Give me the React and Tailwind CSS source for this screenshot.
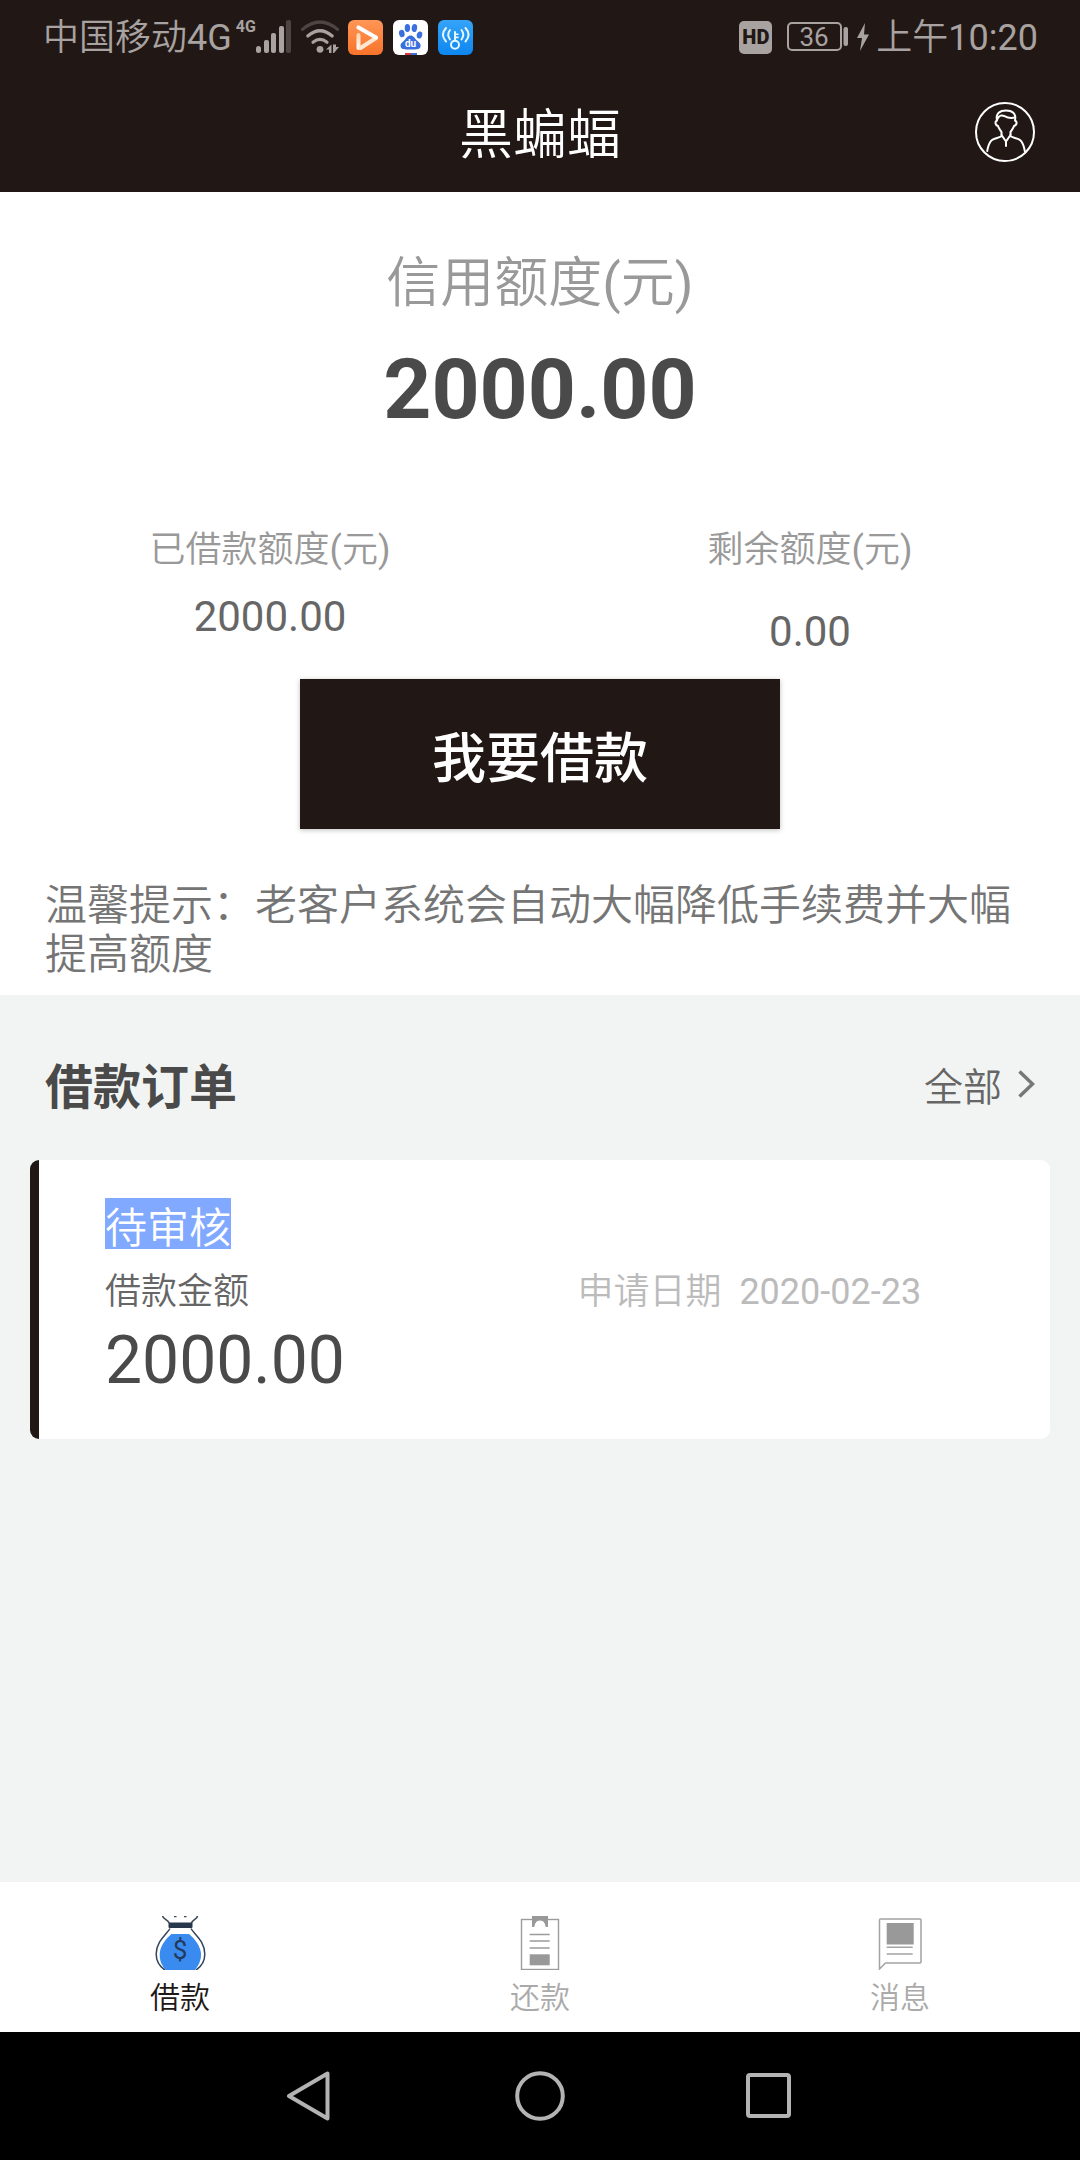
import React, { useState } from 'react';

const SignalIcon = () => (
    <svg width="36" height="34" viewBox="0 0 36 34" fill="#a8a2a1" aria-hidden="true">
        <rect x="0" y="26" width="5" height="7" rx="2.5" />
        <rect x="8" y="20" width="5" height="13" rx="2" />
        <rect x="15" y="13" width="5" height="20" rx="2" />
        <rect x="23" y="6" width="5" height="27" rx="2" />
        <rect x="30" y="0" width="5" height="33" rx="2" fill="#4d4544" />
    </svg>
);

const WifiIcon = () => (
    <svg width="40" height="36" viewBox="0 0 40 36" fill="none" strokeWidth="3.2" strokeLinecap="round" aria-hidden="true">
        <path d="M2.5 10.4Q20 -4.4 37.5 10.4" stroke="#4d4544" />
        <path d="M7.8 17Q20 6.5 32.2 17" stroke="#a8a2a1" />
        <path d="M13 23.2Q20 17.6 27 23.2" stroke="#a8a2a1" />
        <circle cx="20" cy="30.3" r="3.4" fill="#a8a2a1" />
        <path d="M31.500 25.500v8.500h-2.500v-3.500H26zM33 25.500v8.500h1l5-6h-3v-2.500z" fill="#a8a2a1" />
    </svg>
);

const PlayAppIcon = () => (
    <svg width="35" height="35" viewBox="0 0 35 35" fill="none" strokeLinecap="round" strokeLinejoin="round" aria-hidden="true">
        <defs>
            <linearGradient id="playBg" x1="0" y1="0" x2="0" y2="1">
                <stop offset="0" stopColor="#ff9656" />
                <stop offset="1" stopColor="#f9732a" />
            </linearGradient>
            <linearGradient id="playBar" x1="0" y1="14" x2="0" y2="29" gradientUnits="userSpaceOnUse">
                <stop offset="0" stopColor="#ffd2ac" />
                <stop offset="1" stopColor="#ffffff" />
            </linearGradient>
        </defs>
        <rect width="35" height="35" rx="6" fill="url(#playBg)" />
        <path d="M10.500 15v13" stroke="url(#playBar)" strokeWidth="4" />
        <path d="M12.500 28L28 18" stroke="#ffe6d0" strokeWidth="4" />
        <path d="M10.500 7.500L28 17.500" stroke="#fff" strokeWidth="4.200" />
    </svg>
);

const BaiduIcon = () => (
    <svg width="35" height="35" viewBox="0 0 35 35" aria-hidden="true">
        <rect width="35" height="35" rx="6" fill="#fff" />
        <path d="M12 33h6v2h-6z" fill="#d8383b" />
        <path d="M18 33h6v2h-6z" fill="#3a6fe0" />
        <g fill="#3a6fe0">
            <ellipse cx="8.800" cy="13.500" rx="2.800" ry="3.700" transform="rotate(-12 8.800 13.500)" />
            <ellipse cx="14.400" cy="8" rx="2.700" ry="4" />
            <ellipse cx="21.400" cy="8" rx="2.700" ry="4" transform="rotate(8 21.400 8)" />
            <ellipse cx="26.500" cy="15" rx="2.700" ry="3.600" transform="rotate(14 26.500 15)" />
            <path d="M17.500 15.500c3 0 4 2.700 6.200 4.700 3 2.600 4.600 4 3.700 6.800-1 2.700-3.800 2.400-9.900 2.400s-8.700.3-9.700-2.400c-.9-2.800.8-4.200 3.600-6.800 2.200-2 3.100-4.700 6.100-4.700z" />
        </g>
        <text x="17.500" y="27" textAnchor="middle" fill="#fff" fontSize="10" fontWeight="700" fontFamily="Roboto, sans-serif">du</text>
    </svg>
);

const WifiKeyIcon = () => (
    <svg width="35" height="35" viewBox="0 0 35 35" fill="none" stroke="#e6f6ff" strokeWidth="2" strokeLinecap="round" aria-hidden="true">
        <defs>
            <linearGradient id="keyBg" x1="0" y1="0" x2="0" y2="1">
                <stop offset="0" stopColor="#35a4f9" />
                <stop offset="1" stopColor="#0d86f0" />
            </linearGradient>
        </defs>
        <rect width="35" height="35" rx="6" fill="url(#keyBg)" stroke="none" />
        <circle cx="17" cy="24.700" r="4" />
        <path d="M17 20.500V12" />
        <path d="M18 14.200h2M18 17.400h2" strokeWidth="1.600" />
        <path d="M12 10Q8.500 14.500 12 19.500M8 8Q2 14.500 8 21.500" />
        <path d="M23.500 10Q27 14.500 23.500 19.500M27.500 8Q33.500 14.500 27.500 21.500" />
    </svg>
);

const BatteryIcon = () => (
    <svg width="64" height="32" viewBox="0 0 64 32" aria-hidden="true">
        <rect x="2" y="2" width="53" height="27" rx="4" fill="none" stroke="#a8a2a1" strokeWidth="2" />
        <rect x="57.500" y="6" width="4.500" height="19" rx="2" fill="#a8a2a1" />
        <text x="28" y="25" textAnchor="middle" fill="#a8a2a1" fontSize="26" fontWeight="400" fontFamily="Roboto, sans-serif">36</text>
    </svg>
);

const BoltIcon = () => (
    <svg width="14" height="28" viewBox="0 0 14 28" fill="#a8a2a1" aria-hidden="true">
        <path d="M9 0L1 15h5l-2 13L13 11.500H8z" />
    </svg>
);

const UserIcon = () => (
    <svg width="60" height="60" viewBox="0 0 60 60" fill="none" stroke="#fff" strokeWidth="2" strokeLinecap="round" strokeLinejoin="round" aria-hidden="true">
        <circle cx="30" cy="30" r="29" />
        <path d="M26.500 33v-3c-.8-1.500-2.800-3.500-3.500-6-3-1.200-3.500-4.300-1-5.500C20.500 11 25 8.500 31 8.500s10.500 2.500 9 10c2.500 1.200 2 4.300-1 5.500-.7 2.500-2.700 4.500-3.500 6v3" />
        <path d="M22.500 17c1.500-4 4.500-4 7-2.800 3 1.600 6 2.300 10.500 1.300" />
        <path d="M26.500 33L31 39.500l4.500-6.500M31 39.500V44" />
        <path d="M26 34.500c-2.500 1.500-6.500 1.500-9 3.500-3 2.500-4 6.500-4.800 11M36 34.500c2.500 1.500 6.500 1.500 9 3.500 3 2.500 4 6.500 4.800 11" />
    </svg>
);

const MoneyBagIcon = () => (
    <svg width="54" height="54" viewBox="0 0 54 54" fill="none" aria-hidden="true">
        <path d="M18.500 18h17.500C42 23 47.500 30 48 38c.2 7-3 12-6 16H12.500C9.500 50 6.500 46 6.700 38 7 30 12.500 23 18.500 18z" fill="#3a8bef" />
        <path d="M9.700 0c0 3 5 3.500 6.500 7M44.500 0c0 3-5 3.500-6 7M21 .5h2.500M31 .5h2.500" stroke="#3c4858" strokeWidth="1.600" />
        <path d="M17 12.500C14 18 3.200 25 3.200 38c0 7 2.800 12 8.800 16M38 12.500C41 18 51.800 25 51.800 38c0 7-2.800 12-8.800 16" stroke="#33445a" strokeWidth="1.500" />
        <rect x="15.500" y="6.500" width="24" height="5.500" rx="1" fill="#27364a" />
        <text x="27" y="43" textAnchor="middle" fill="#223a5c" fontSize="26" fontWeight="400" fontFamily="Roboto, sans-serif">$</text>
    </svg>
);

const RepayIcon = () => (
    <svg width="54" height="54" viewBox="0 0 54 54" fill="none" aria-hidden="true">
        <rect x="8.500" y="3.500" width="37" height="50" stroke="#9b9b9b" strokeWidth="1.400" />
        <path d="M19 0h16v11h-2.300C32 6.500 30 4.500 27 4.500S22 6.500 21.300 11H19z" fill="#999" />
        <path d="M21.800 11C22.300 7 24 5 27 5s4.700 2 5.200 6z" fill="#fff" />
        <path d="M16.700 18.500h20M16.700 25h20M16.700 32h20" stroke="#9b9b9b" strokeWidth="1.600" />
        <rect x="16.700" y="38.300" width="20" height="11" fill="#999" />
    </svg>
);

const MessageIcon = () => (
    <svg width="54" height="54" viewBox="0 0 54 54" fill="none" aria-hidden="true">
        <path d="M6.500 53V4q0-1 1-1h39.500q1 0 1 1v42q0 1-1 1H12.500z" stroke="#a3a3a3" strokeWidth="1.500" />
        <rect x="13.700" y="7" width="27" height="21.500" fill="#999" />
        <path d="M13.700 31.300h26M13.700 38h26" stroke="#a3a3a3" strokeWidth="1.600" />
    </svg>
);

const tabs = [
    { id: 'loan', label: '借款', Icon: MoneyBagIcon },
    { id: 'repay', label: '还款', Icon: RepayIcon },
    { id: 'message', label: '消息', Icon: MessageIcon },
];

const orders = [
    { id: 1, status: '待审核', amount: 2000, date: '2020-02-23' },
];

// Latin characters keep the regular weight next to the lighter Chinese text
const Latin = ({ children }) => <span className="font-normal">{children}</span>;

const Yuan = () => (
    <>
        <Latin>(</Latin>元<Latin>)</Latin>
    </>
);

const StatusBar = () => (
    <div className="flex h-[74px] items-center justify-between pr-[42px] pl-[43px] text-[36px] leading-[44px] text-[#a8a2a1]">
        <div className="flex items-center">
            <span className="pt-0.5">中国移动<Latin>4G</Latin></span>
            <span className="mb-5 ml-1 text-[16px] leading-[18px] font-bold">4G</span>
            <SignalIcon />
            <span className="ml-2"><WifiIcon /></span>
            <div className="ml-2 flex gap-[10px]">
                <PlayAppIcon />
                <BaiduIcon />
                <WifiKeyIcon />
            </div>
        </div>
        <div className="flex items-center">
            <span className="mr-[14px] flex h-[33px] w-[33px] items-center justify-center rounded-[5px] bg-[#a8a2a1] text-[20px] leading-[33px] font-black text-[#211815]">HD</span>
            <BatteryIcon />
            <span className="mx-[6px]"><BoltIcon /></span>
            <span className="pt-0.5">上午<Latin>10:20</Latin></span>
        </div>
    </div>
);

const OrderCard = ({ order }) => (
    <article className="overflow-hidden rounded-[9px] bg-white">
        <div className="border-l-[9px] border-[#211815] pt-[38px] pb-[42px] pl-[66px]">
            <span className="inline-block bg-[#80a9ff] pt-[11px] align-top text-[42px] leading-[40px] text-white">{order.status}</span>
            <div className="mt-[21px] grid grid-cols-2 text-[36px] leading-[44px]">
                <span className="text-[#666]">借款金额</span>
                <span className="whitespace-pre text-[#bbb]">申请日期<Latin>{'  '}{order.date}</Latin></span>
            </div>
            <p className="mt-[11px] text-[66px] leading-[72px] font-normal text-[#4a4a4a]">{order.amount.toFixed(2)}</p>
        </div>
    </article>
);

const App = () => {
    const [activeTab, setActiveTab] = useState('loan');

    return (
        <div className="flex min-h-screen flex-col bg-[#f2f4f3] font-[Roboto,'Noto_Sans_CJK_SC',sans-serif] font-[350]">
            <header className="bg-[#211815]">
                <StatusBar />
                <div className="grid h-[118px] grid-cols-[1fr_auto_1fr] items-center px-[45px] pb-0.5">
                    <h1 className="col-start-2 pt-2 text-[54px] leading-[64px] font-[350] text-white">黑蝙蝠</h1>
                    <button type="button" aria-label="我的" className="justify-self-end cursor-pointer">
                        <UserIcon />
                    </button>
                </div>
            </header>

            <main className="flex-1">
                <section className="bg-white pt-[60px] pb-[15px] text-center">
                    <h2 className="text-[54px] leading-[64px] font-[350] text-[#999]">信用额度<Yuan /></h2>
                    <p className="mt-6 text-[84px] leading-[100px] font-bold text-[#4a4a4a]">2000.00</p>

                    <div className="mt-[88px] grid grid-cols-2">
                        <div>
                            <p className="text-[36px] leading-[44px] text-[#999]">已借款额度<Yuan /></p>
                            <p className="mt-[21px] text-[42px] leading-[48px] font-normal text-[#666]">2000.00</p>
                        </div>
                        <div>
                            <p className="text-[36px] leading-[44px] text-[#999]">剩余额度<Yuan /></p>
                            <p className="mt-[36px] text-[42px] leading-[48px] font-normal text-[#666]">0.00</p>
                        </div>
                    </div>

                    <button
                        type="button"
                        className="mt-[23px] h-[150px] w-[480px] cursor-pointer bg-[#211815] pt-3 align-top text-[54px] leading-[64px] font-medium text-white shadow-[0_1px_5px_rgba(0,0,0,0.25)]"
                    >
                        我要借款
                    </button>

                    <p className="mt-[52px] px-[45px] pb-px text-left text-[42px] leading-[49px] text-[#757575]">
                        温馨提示：老客户系统会自动大幅降低手续费并大幅提高额度
                    </p>
                </section>

                <section className="px-[30px] pt-[65px] pb-10">
                    <div className="flex items-center justify-between px-[15px]">
                        <h2 className="text-[48px] leading-[56px] font-bold text-[#4a4a4a]">借款订单</h2>
                        <a href="#orders" className="flex items-center gap-4 text-[39px] leading-[56px] text-[#666]">
                            全部
                            <svg className="mb-2" width="17" height="28" viewBox="0 0 17 28" fill="none" stroke="#777" strokeWidth="3.500" aria-hidden="true">
                                <path d="M1.500 1.500L14.500 14L1.500 26.500" />
                            </svg>
                        </a>
                    </div>
                    <div id="orders" className="mt-11 flex flex-col gap-6">
                        {orders.map((order) => (
                            <OrderCard key={order.id} order={order} />
                        ))}
                    </div>
                </section>
            </main>

            <nav className="grid grid-cols-3 bg-white">
                {tabs.map(({ id, label, Icon }) => (
                    <button
                        key={id}
                        type="button"
                        onClick={() => setActiveTab(id)}
                        className={`flex cursor-pointer flex-col items-center pt-[34px] pb-4 text-[30px] leading-[36px] ${activeTab === id ? 'text-[#211815]' : 'text-[#aaa]'}`}
                    >
                        <Icon />
                        <span className="mt-[10px]">{label}</span>
                    </button>
                ))}
            </nav>

            <div className="flex h-32 items-center justify-center gap-[180px] bg-black">
                <button type="button" aria-label="返回" className="cursor-pointer">
                    <svg width="50" height="50" viewBox="0 0 50 50" fill="none" stroke="#b3b3b3" strokeWidth="4" strokeLinejoin="round">
                        <path d="M42.500 2.500v45L4 25z" />
                    </svg>
                </button>
                <button type="button" aria-label="主页" className="cursor-pointer">
                    <svg width="50" height="50" viewBox="0 0 50 50" fill="none" stroke="#b3b3b3" strokeWidth="4">
                        <circle cx="25" cy="25" r="22.800" />
                    </svg>
                </button>
                <button type="button" aria-label="最近任务" className="cursor-pointer">
                    <svg width="50" height="50" viewBox="0 0 50 50" fill="none" stroke="#b3b3b3" strokeWidth="4">
                        <rect x="3" y="4" width="41" height="41" rx="2" />
                    </svg>
                </button>
            </div>
        </div>
    );
};

export default App;
